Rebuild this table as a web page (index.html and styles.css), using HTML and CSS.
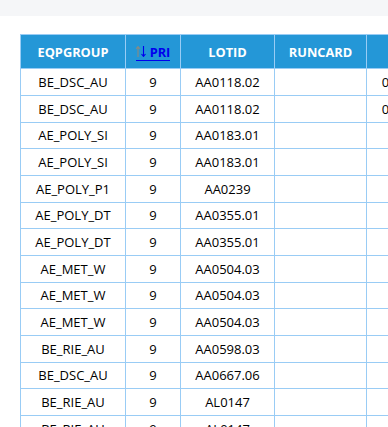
FILE: index.html
```html
<!DOCTYPE html>
<html>
<head>
<meta charset="utf-8">
<link rel="stylesheet" href="styles.css">
</head>
<body>
<div class="topbar"></div>
<div class="content">
  <table class="grid">
    <colgroup>
      <col class="c1"><col class="c2"><col class="c3"><col class="c4"><col class="c5"><col class="c6">
    </colgroup>
    <thead>
      <tr>
        <th>EQPGROUP</th>
        <th><a class="sort" href="#"><svg class="arrows" width="10" height="11" viewBox="0 0 10 11"><path d="M2 1V11M0 3L2 0.6L4 3" fill="none" stroke="#8a8a80" stroke-width="1.1"/><path d="M7.5 0V10M5.5 8L7.5 10.4L9.5 8" fill="none" stroke="#0000ee" stroke-width="1.1"/></svg><span>PRI</span></a></th>
        <th>LOTID</th>
        <th>RUNCARD</th>
        <th></th>
        <th></th>
      </tr>
    </thead>
    <tbody>
      <tr><td>BE_DSC_AU</td><td>9</td><td>AA0118.02</td><td></td><td>0</td><td></td></tr>
      <tr><td>BE_DSC_AU</td><td>9</td><td>AA0118.02</td><td></td><td>0</td><td></td></tr>
      <tr><td>AE_POLY_SI</td><td>9</td><td>AA0183.01</td><td></td><td></td><td></td></tr>
      <tr><td>AE_POLY_SI</td><td>9</td><td>AA0183.01</td><td></td><td></td><td></td></tr>
      <tr><td>AE_POLY_P1</td><td>9</td><td>AA0239</td><td></td><td></td><td></td></tr>
      <tr><td>AE_POLY_DT</td><td>9</td><td>AA0355.01</td><td></td><td></td><td></td></tr>
      <tr><td>AE_POLY_DT</td><td>9</td><td>AA0355.01</td><td></td><td></td><td></td></tr>
      <tr><td>AE_MET_W</td><td>9</td><td>AA0504.03</td><td></td><td></td><td></td></tr>
      <tr><td>AE_MET_W</td><td>9</td><td>AA0504.03</td><td></td><td></td><td></td></tr>
      <tr><td>AE_MET_W</td><td>9</td><td>AA0504.03</td><td></td><td></td><td></td></tr>
      <tr><td>BE_RIE_AU</td><td>9</td><td>AA0598.03</td><td></td><td></td><td></td></tr>
      <tr><td>BE_DSC_AU</td><td>9</td><td>AA0667.06</td><td></td><td></td><td></td></tr>
      <tr><td>BE_RIE_AU</td><td>9</td><td>AL0147</td><td></td><td></td><td></td></tr>
      <tr><td>BE_RIE_AU</td><td>9</td><td>AL0147</td><td></td><td></td><td></td></tr>
    </tbody>
  </table>
</div>
</body>
</html>
```
FILE: styles.css
```css
html, body {
  margin: 0;
  padding: 0;
  background: #ffffff;
  overflow: hidden;
  height: 427px;
}
body {
  font-family: "Open Sans", "Noto Sans", sans-serif;
  color: #000000;
}
.topbar {
  height: 16px;
  background: #f5f6f8;
}
.content {
  padding: 18px 0 0 20px;
  width: 600px;
}
.grid {
  border-collapse: collapse;
  table-layout: fixed;
  width: 570px;
}
.c1 { width: 105px; }
.c2 { width: 55px; }
.c3 { width: 94px; }
.c4 { width: 92px; }
.c5 { width: 38px; }
.c6 { width: 186px; }
.grid th, .grid td {
  border: 1px solid #99ccf5;
  text-align: center;
  padding: 0;
  white-space: nowrap;
  line-height: 18px;
}
.grid th {
  background: #2497d7;
  color: #ffffff;
  font-weight: 700;
  font-size: 12.8px;
  height: 33.3px;
}
.grid td {
  font-size: 13px;
  height: 25.67px;
}
.sort {
  display: inline-flex;
  align-items: flex-end;
  gap: 4px;
  color: #0000ee;
  text-decoration: none;
  border-bottom: 1px solid #0000ee;
  line-height: 14px;
  padding-bottom: 1px;
  margin-top: 3px;
}
.arrows {
  display: block;
  margin-bottom: 2px;
}
```
